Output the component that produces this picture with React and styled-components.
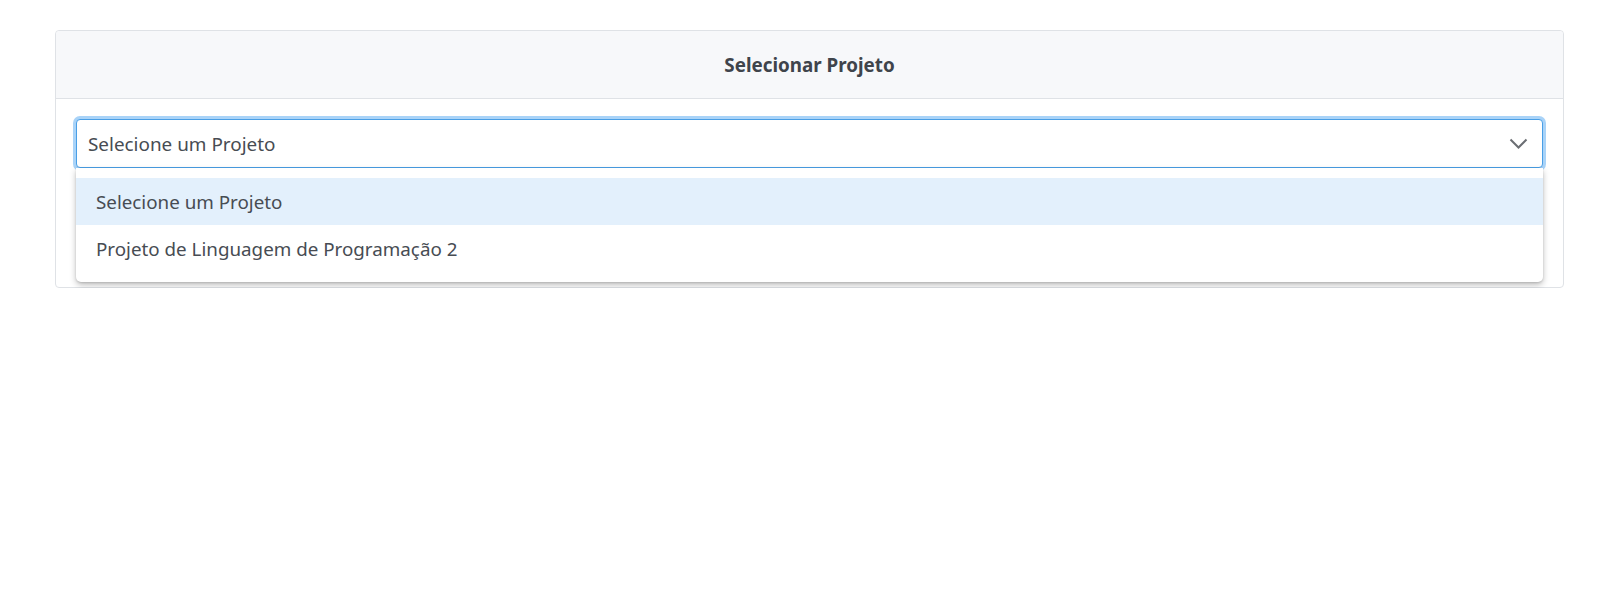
import React from 'react';
import styled, { createGlobalStyle } from 'styled-components';

const GlobalStyle = createGlobalStyle`
  html, body {
    margin: 0;
    padding: 0;
    background: #ffffff;
    font-family: "Noto Sans", "Open Sans", sans-serif;
  }
`;

const Page = styled.div`
  padding: 30px 36px 0 55px;
`;

const Card = styled.div`
  border: 1px solid #dfe2e6;
  border-radius: 4px;
  background: #ffffff;
`;

const CardHeader = styled.div`
  height: 68px;
  display: flex;
  align-items: center;
  justify-content: center;
  padding-top: 1px;
  box-sizing: border-box;
  background: #f7f8fa;
  border-bottom: 1px solid #dfe2e6;
  border-radius: 4px 4px 0 0;
  font-size: 18.8px;
  font-weight: 700;
  color: #3f444b;
`;

const CardBody = styled.div`
  padding: 20px 20px;
  min-height: 148px;
`;

const SelectWrap = styled.div`
  position: relative;
`;

const SelectBox = styled.div`
  height: 49px;
  box-sizing: border-box;
  display: flex;
  align-items: center;
  justify-content: space-between;
  padding: 0 14px 0 11px;
  border: 1px solid #4a9fe6;
  border-radius: 4px;
  box-shadow: 0 0 0 3px #a9d3f8;
  font-size: 18.9px;
  color: #474c53;
  background: #ffffff;
`;

const Menu = styled.div`
  position: absolute;
  top: 49px;
  left: 0;
  right: 0;
  padding: 10px 0;
  background: #ffffff;
  border-radius: 0 0 5px 5px;
  box-shadow: 0 3px 6px rgba(0, 0, 0, 0.25), 0 1px 2px rgba(0, 0, 0, 0.12);
`;

const Option = styled.div`
  height: 47px;
  display: flex;
  align-items: center;
  padding: 1px 0 0 20px;
  box-sizing: border-box;
  font-size: 18.8px;
  color: #474c53;
  background: ${p => (p.active ? '#e3f0fc' : 'transparent')};
`;

const Chevron = () => (
  <svg width="19" height="12" viewBox="0 0 19 12" fill="none">
    <path d="M1.5 1.5 L9.5 9.5 L17.5 1.5" stroke="#6b6e73" strokeWidth="2" />
  </svg>
);

const options = ['Selecione um Projeto', 'Projeto de Linguagem de Programação 2'];

export default function App() {
  return (
    <>
      <GlobalStyle />
      <Page>
        <Card>
          <CardHeader>Selecionar Projeto</CardHeader>
          <CardBody>
            <SelectWrap>
              <SelectBox>
                <span>Selecione um Projeto</span>
                <Chevron />
              </SelectBox>
              <Menu>
                {options.map((o, i) => (
                  <Option key={o} active={i === 0}>{o}</Option>
                ))}
              </Menu>
            </SelectWrap>
          </CardBody>
        </Card>
      </Page>
    </>
  );
}
